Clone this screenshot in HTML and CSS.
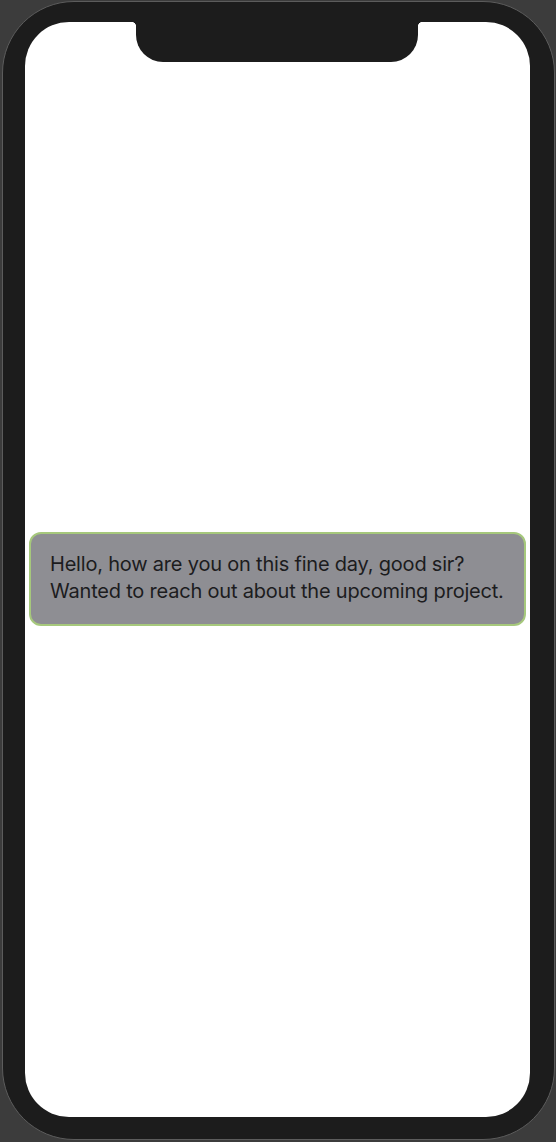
FILE: index.html
```html
<!DOCTYPE html>
<html>
<head>
<meta charset="utf-8">
<link rel="stylesheet" href="styles.css">
</head>
<body>
<div class="phone">
  <div class="screen">
    <div class="notch"></div>
    <div class="bubble">
      <p class="message">Hello, how are you on this fine day, good sir?<br>Wanted to reach out about the upcoming project.</p>
    </div>
  </div>
</div>
</body>
</html>
```
FILE: styles.css
```css
html, body {
  margin: 0;
  padding: 0;
}
body {
  background: #3c3c3c;
  width: 556px;
  height: 1142px;
  overflow: hidden;
  font-family: "Inter", "Liberation Sans", sans-serif;
}
.phone {
  box-sizing: border-box;
  margin: 1px 0 0 2px;
  width: 553px;
  height: 1139px;
  border: 1px solid #5c5c5c;
  border-radius: 72px;
  background: #1c1c1c;
  padding: 20px 24px 22px 22px;
}
.screen {
  position: relative;
  height: 100%;
  background: #ffffff;
  border-radius: 44px;
  display: flex;
  flex-direction: column;
  justify-content: center;
  padding: 19px 4px 0 4px;
  box-sizing: border-box;
}
.notch {
  position: absolute;
  top: 0;
  left: 111px;
  width: 282px;
  height: 40px;
  background: #1c1c1c;
  border-radius: 0 0 27px 27px;
}
.notch::before,
.notch::after {
  content: "";
  position: absolute;
  top: 0;
  width: 5px;
  height: 5px;
}
.notch::before {
  left: -5px;
  background: radial-gradient(circle at 0 100%, transparent 5px, #1c1c1c 5.5px);
}
.notch::after {
  right: -5px;
  background: radial-gradient(circle at 100% 100%, transparent 5px, #1c1c1c 5.5px);
}
.bubble {
  background: #8e8e93;
  border: 2px solid #a6c87c;
  border-radius: 12px;
  padding: 17px 19px 19px 19px;
}
.message {
  margin: 0;
  color: #1c1c1e;
  font-size: 20px;
  line-height: 27px;
  letter-spacing: -0.2px;
}
```
